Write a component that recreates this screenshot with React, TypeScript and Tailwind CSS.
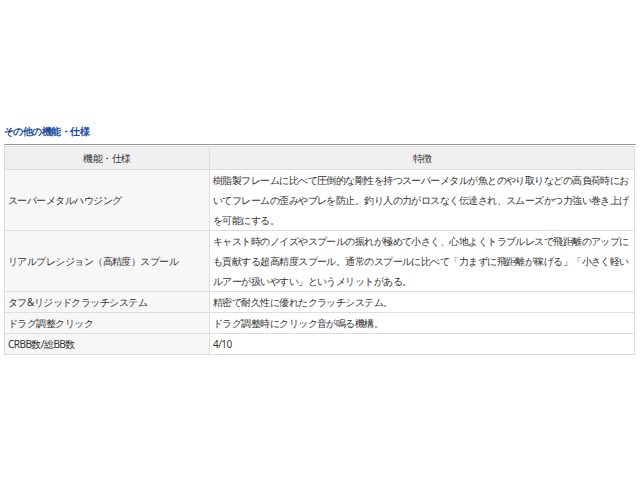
const rows: [string, string][] = [
  ["スーパーメタルハウジング", "樹脂製フレームに比べて圧倒的な剛性を持つスーパーメタルが魚とのやり取りなどの高負荷時においてフレームの歪みやブレを防止。釣り人の力がロスなく伝達され、スムーズかつ力強い巻き上げを可能にする。"],
  ["リアルプレシジョン（高精度）スプール", "キャスト時のノイズやスプールの振れが極めて小さく、心地よくトラブルレスで飛距離のアップにも貢献する超高精度スプール。通常のスプールに比べて「力まずに飛距離が稼げる」「小さく軽いルアーが扱いやすい」というメリットがある。"],
  ["タフ&リジッドクラッチシステム", "精密で耐久性に優れたクラッチシステム。"],
  ["ドラグ調整クリック", "ドラグ調整時にクリック音が鳴る機構。"],
  ["CRBB数/総BB数", "4/10"],
];

export default function App() {
  return (
    <div className="h-[480px] w-[640px] bg-white pt-[124px] text-[10px] tracking-[-0.55px] text-[#333] [font-family:'Noto_Sans_CJK_JP',sans-serif]">
      <div className="px-[4px] text-[10px] font-bold leading-[14px] text-[#1a4d9c]">その他の機能・仕様</div>
      <div className="mx-[4px] mt-[6px] border-t border-[#999]" />
      <table className="mx-[4px] mt-[1px] w-[631px] border-collapse">
        <thead>
          <tr className="h-[23px] bg-[#f0f0f0]">
            <th className="w-[205px] border border-[#ddd] font-normal">機能・仕様</th>
            <th className="border border-[#ddd] font-normal">特徴</th>
          </tr>
        </thead>
        <tbody>
          {rows.map(([k, v]) => (
            <tr key={k}>
              <td className="border border-[#ddd] bg-[#f7f7f7] px-[3px] py-0 leading-[20px]">{k}</td>
              <td className="border border-[#ddd] px-[3px] py-0 leading-[20px]">{v}</td>
            </tr>
          ))}
        </tbody>
      </table>
    </div>
  );
}
